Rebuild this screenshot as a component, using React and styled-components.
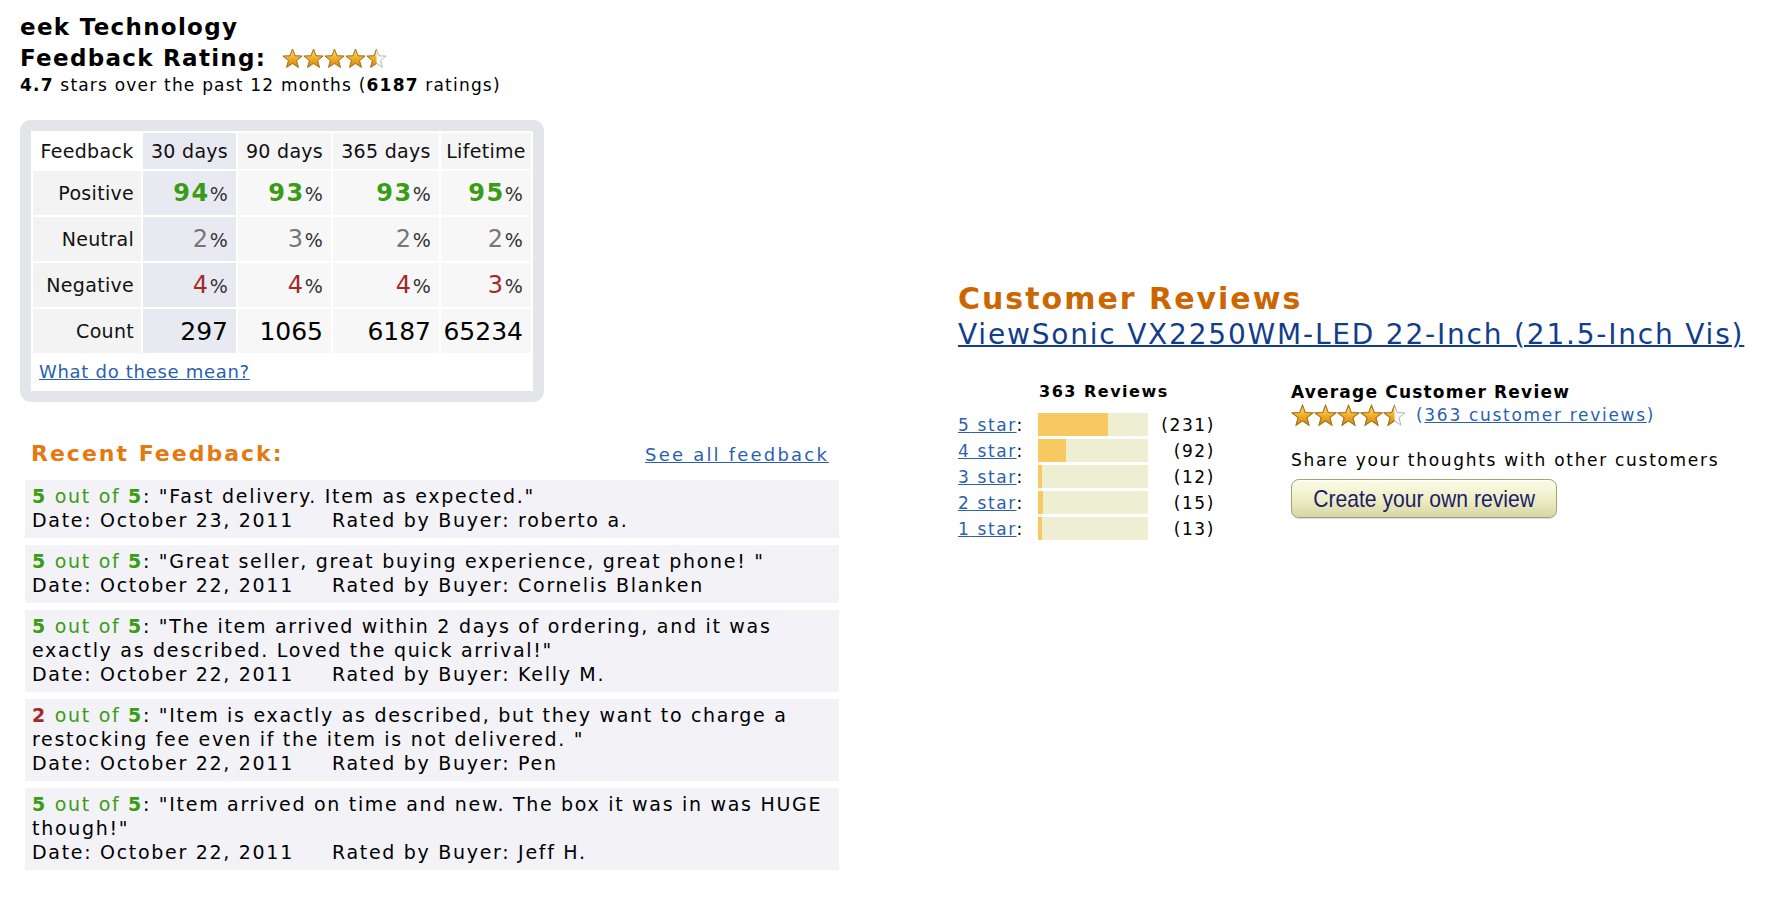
import React from "react";
import styled, { createGlobalStyle } from "styled-components";

const GlobalStyle = createGlobalStyle`
  body {
    margin: 0;
    background: #fff;
    color: #111;
    font-family: "DejaVu Sans", Verdana, sans-serif;
  }
`;

const stats = [
  { label: "Positive", kind: "positive", values: [94, 93, 93, 95] },
  { label: "Neutral", kind: "neutral", values: [2, 3, 2, 2] },
  { label: "Negative", kind: "negative", values: [4, 4, 4, 3] },
];
const counts = [297, 1065, 6187, 65234];
const periods = ["30 days", "90 days", "365 days", "Lifetime"];

const feedback = [
  { score: 5, text: "Fast delivery. Item as expected.", date: "October 23, 2011", buyer: "roberto a." },
  { score: 5, text: "Great seller, great buying experience, great phone! ", date: "October 22, 2011", buyer: "Cornelis Blanken" },
  {
    score: 5,
    text: "The item arrived within 2 days of ordering, and it was exactly as described. Loved the quick arrival!",
    date: "October 22, 2011",
    buyer: "Kelly M.",
  },
  {
    score: 2,
    text: "Item is exactly as described, but they want to charge a restocking fee even if the item is not delivered. ",
    date: "October 22, 2011",
    buyer: "Pen",
  },
  { score: 5, text: "Item arrived on time and new. The box it was in was HUGE though!", date: "October 22, 2011", buyer: "Jeff H." },
];

const histogram = [
  { stars: 5, count: 231 },
  { stars: 4, count: 92 },
  { stars: 3, count: 12 },
  { stars: 2, count: 15 },
  { stars: 1, count: 13 },
];
const totalReviews = 363;

// 5 point star inside a 24x24 cell
const STAR = "12,1.3 14.82,8.92 22.94,9.25 16.57,14.28 18.76,22.1 12,17.6 5.24,22.1 7.43,14.28 1.06,9.25 9.18,8.92";

const StarRating = ({ id, size, fill }) => (
  <StarSvg width={size * 5} height={size} viewBox="0 0 120 24">
    <defs>
      <linearGradient id={`${id}-gold`} x1="0" y1="0" x2="0" y2="1">
        <stop offset="0" stopColor="#fde39a" />
        <stop offset="0.45" stopColor="#f2b431" />
        <stop offset="1" stopColor="#d3860a" />
      </linearGradient>
      <clipPath id={`${id}-clip`}>
        <rect x="0" y="0" width={fill} height="24" />
      </clipPath>
    </defs>
    {[0, 1, 2, 3, 4].map((i) => (
      <polygon key={i} points={STAR} transform={`translate(${i * 24} 0)`} fill="#fafafa" stroke="#b0b0b0" strokeWidth="1" />
    ))}
    <g clipPath={`url(#${id}-clip)`}>
      {[0, 1, 2, 3, 4].map((i) => (
        <polygon
          key={i}
          points={STAR}
          transform={`translate(${i * 24} 0)`}
          fill={`url(#${id}-gold)`}
          stroke="#a86f0e"
          strokeWidth="1.1"
        />
      ))}
    </g>
  </StarSvg>
);

const App = () => {
  return (
    <>
      <GlobalStyle />
      <Page>
        <LeftColumn>
          <SellerName>eek Technology</SellerName>
          <RatingLine>
            Feedback Rating:
            <StarRating id="seller" size={21} fill={108} />
          </RatingLine>
          <RatingSummary>
            <b>4.7</b> stars over the past 12 months (<b>6187</b> ratings)
          </RatingSummary>

          <StatsBox>
            <StatsTable>
              <colgroup>
                <col style={{ width: 108 }} />
                <col style={{ width: 93 }} />
                <col style={{ width: 93 }} />
                <col style={{ width: 106 }} />
                <col style={{ width: 90 }} />
              </colgroup>
              <thead>
                <tr>
                  <HeadCell $first>Feedback</HeadCell>
                  {periods.map((p, i) => (
                    <HeadCell key={p} $recent={i === 0}>
                      {p}
                    </HeadCell>
                  ))}
                </tr>
              </thead>
              <tbody>
                {stats.map((row) => (
                  <tr key={row.label}>
                    <LabelCell>{row.label}</LabelCell>
                    {row.values.map((v, i) => (
                      <ValueCell key={i} $recent={i === 0}>
                        <Percent $kind={row.kind}>{v}</Percent>
                        <PercentSign>%</PercentSign>
                      </ValueCell>
                    ))}
                  </tr>
                ))}
                <tr>
                  <LabelCell>Count</LabelCell>
                  {counts.map((c, i) => (
                    <ValueCell key={i} $recent={i === 0}>
                      <CountValue>{c}</CountValue>
                    </ValueCell>
                  ))}
                </tr>
              </tbody>
            </StatsTable>
            <MeaningLink href="#">What do these mean?</MeaningLink>
          </StatsBox>

          <RecentSection>
            <RecentHeader>
              <RecentTitle>Recent Feedback:</RecentTitle>
              <SeeAllLink href="#">See all feedback</SeeAllLink>
            </RecentHeader>
            <FeedbackList>
              {feedback.map((f, i) => (
                <FeedbackItem key={i}>
                  <div>
                    <Score $low={f.score < 3}>{f.score}</Score>
                    <OutOf>
                      {" "}out of <b>5</b>
                    </OutOf>
                    : "{f.text}"
                  </div>
                  <div>
                    Date: {f.date}
                    <RatedBy>Rated by Buyer: {f.buyer}</RatedBy>
                  </div>
                </FeedbackItem>
              ))}
            </FeedbackList>
          </RecentSection>
        </LeftColumn>

        <RightColumn>
          <ReviewsTitle>Customer Reviews</ReviewsTitle>
          <ProductLink href="#">ViewSonic VX2250WM-LED 22-Inch (21.5-Inch Vis)</ProductLink>

          <ReviewSummary>
            <Histogram>
              <HistogramTitle>{totalReviews} Reviews</HistogramTitle>
              {histogram.map((h) => (
                <HistogramRow key={h.stars}>
                  <StarLabel>
                    <SmallLink href="#">{h.stars} star</SmallLink>:
                  </StarLabel>
                  <Bar>
                    <BarFill style={{ width: `${(h.count / totalReviews) * 100}%` }} />
                  </Bar>
                  <BarCount>({h.count})</BarCount>
                </HistogramRow>
              ))}
            </Histogram>

            <AverageBlock>
              <AverageTitle>Average Customer Review</AverageTitle>
              <AverageStars>
                <StarRating id="avg" size={23} fill={108} />
                <ReviewCount>
                  (<SmallLink href="#">363 customer reviews</SmallLink>)
                </ReviewCount>
              </AverageStars>
              <ShareText>Share your thoughts with other customers</ShareText>
              <CreateButton type="button">
                <ButtonLabel>Create your own review</ButtonLabel>
              </CreateButton>
            </AverageBlock>
          </ReviewSummary>
        </RightColumn>
      </Page>
    </>
  );
};

const Page = styled.div`
  display: flex;
  align-items: flex-start;
  width: 1777px;
  min-height: 906px;
`;

const LeftColumn = styled.div`
  width: 819px;
  padding: 12px 0 0 20px;
`;

const SellerName = styled.div`
  font-size: 23px;
  font-weight: bold;
  letter-spacing: 1.3px;
  line-height: 31px;
  color: #000;
`;

const RatingLine = styled(SellerName)`
  display: flex;
  align-items: center;
  gap: 16px;
`;

const StarSvg = styled.svg`
  display: block;
  flex: none;
`;

const RatingSummary = styled.div`
  font-size: 17px;
  letter-spacing: 1.2px;
  line-height: 22px;
  color: #000;
`;

const StatsBox = styled.div`
  box-sizing: border-box;
  width: 524px;
  margin-top: 24px;
  border: 11px solid #e4e5ea;
  border-radius: 11px;
  background: #fff;
`;

const StatsTable = styled.table`
  width: 100%;
  table-layout: fixed;
  border-collapse: separate;
  border-spacing: 2px;
  font-size: 19px;
  letter-spacing: 0.3px;

  tbody td {
    height: 44px;
  }
`;

const HeadCell = styled.th`
  height: 36px;
  padding: 0;
  font-weight: normal;
  text-align: center;
  color: #111;
  white-space: nowrap;
  background: ${(p) => (p.$first ? "#fff" : p.$recent ? "#e9eaf1" : "#f5f5f6")};
`;

const LabelCell = styled.td`
  padding: 0 7px 0 0;
  text-align: right;
  color: #111;
  background: #f3f3f3;
`;

const ValueCell = styled.td`
  padding: 0 8px 0 0;
  text-align: right;
  white-space: nowrap;
  background: ${(p) => (p.$recent ? "#e9eaf1" : "#f7f7f7")};
`;

const percentColors = {
  positive: "#3a9c14",
  neutral: "#777",
  negative: "#a52828",
};

const Percent = styled.span`
  font-size: 24px;
  font-weight: ${(p) => (p.$kind === "positive" ? "bold" : "normal")};
  letter-spacing: 1.5px;
  color: ${(p) => percentColors[p.$kind]};
`;

const PercentSign = styled.span`
  font-size: 19px;
  color: #333;
`;

const CountValue = styled.span`
  font-size: 25px;
  color: #000;
  letter-spacing: 0;
`;

const MeaningLink = styled.a`
  display: inline-block;
  padding: 6px 0 8px 8px;
  font-size: 18px;
  letter-spacing: 0.7px;
  line-height: 22px;
  color: #2b5fb0;
`;

const RecentSection = styled.div`
  width: 814px;
  margin: 38px 0 0 5px;
`;

const RecentHeader = styled.div`
  display: flex;
  justify-content: space-between;
  align-items: baseline;
  padding: 0 10px 0 6px;
`;

const RecentTitle = styled.div`
  font-size: 22px;
  font-weight: bold;
  letter-spacing: 2px;
  line-height: 28px;
  color: #e47911;
`;

const SeeAllLink = styled.a`
  font-size: 18px;
  letter-spacing: 2.2px;
  color: #2b5fb0;
`;

const FeedbackList = styled.div`
  display: flex;
  flex-direction: column;
  gap: 7px;
  margin-top: 12px;
`;

const FeedbackItem = styled.div`
  padding: 4px 7px 6px;
  background: #f2f2f7;
  font-size: 19px;
  letter-spacing: 1.7px;
  line-height: 24px;
  color: #000;
`;

const Score = styled.b`
  color: ${(p) => (p.$low ? "#a52828" : "#3a9c14")};
`;

const OutOf = styled.span`
  color: #3a9c14;
`;

const RatedBy = styled.span`
  margin-left: 38px;
`;

const RightColumn = styled.div`
  margin-left: 119px;
  padding-top: 281px;
`;

const ReviewsTitle = styled.div`
  font-size: 30px;
  font-weight: bold;
  letter-spacing: 2px;
  line-height: 36px;
  color: #cc6600;
`;

const ProductLink = styled.a`
  display: block;
  font-size: 28px;
  letter-spacing: 1.8px;
  line-height: 35px;
  white-space: nowrap;
  color: #123d8a;
  text-decoration-thickness: 2px;
`;

const ReviewSummary = styled.div`
  display: flex;
  align-items: flex-start;
  margin-top: 30px;
`;

const Histogram = styled.div`
  display: flex;
  flex-direction: column;
  gap: 3px;
`;

const HistogramTitle = styled.div`
  padding-left: 81px;
  margin-bottom: 8px;
  font-size: 16px;
  font-weight: bold;
  letter-spacing: 1.5px;
  line-height: 20px;
  color: #000;
`;

const HistogramRow = styled.div`
  display: flex;
  align-items: center;
  height: 23px;
  font-size: 17px;
  letter-spacing: 1.6px;
  color: #000;
`;

const StarLabel = styled.div`
  width: 80px;
`;

const SmallLink = styled.a`
  color: #2b5fb0;
`;

const Bar = styled.div`
  width: 110px;
  height: 23px;
  background: #eeeed2;
`;

const BarFill = styled.div`
  min-width: 3px;
  height: 100%;
  background: #f8c960;
`;

const BarCount = styled.div`
  width: 67px;
  text-align: right;
`;

const AverageBlock = styled.div`
  margin-left: 76px;
  display: flex;
  flex-direction: column;
  align-items: flex-start;
  color: #000;
`;

const AverageTitle = styled.div`
  font-size: 17px;
  font-weight: bold;
  letter-spacing: 1.2px;
  line-height: 20px;
`;

const AverageStars = styled.div`
  display: flex;
  align-items: center;
  gap: 10px;
  margin-top: 1px;
  height: 24px;
`;

const ReviewCount = styled.span`
  font-size: 17px;
  letter-spacing: 1.7px;
  color: #2b5fb0;
`;

const ShareText = styled.div`
  margin-top: 22px;
  font-size: 17px;
  letter-spacing: 1.7px;
  line-height: 22px;
`;

const CreateButton = styled.button`
  box-sizing: border-box;
  display: flex;
  align-items: center;
  justify-content: center;
  width: 266px;
  height: 39px;
  margin-top: 8px;
  padding: 0;
  border: 1px solid #a3a377;
  border-radius: 8px;
  background: linear-gradient(#fcfce8, #ededc6 55%, #d6d6a4);
  box-shadow: inset 0 1px 0 #fff, 0 1px 1px rgba(0, 0, 0, 0.15);
  cursor: pointer;
`;

const ButtonLabel = styled.span`
  display: inline-block;
  font-family: "Liberation Sans", Arial, sans-serif;
  font-size: 24px;
  white-space: nowrap;
  color: #1d1d66;
  transform: scaleX(0.88);
`;

export default App;
